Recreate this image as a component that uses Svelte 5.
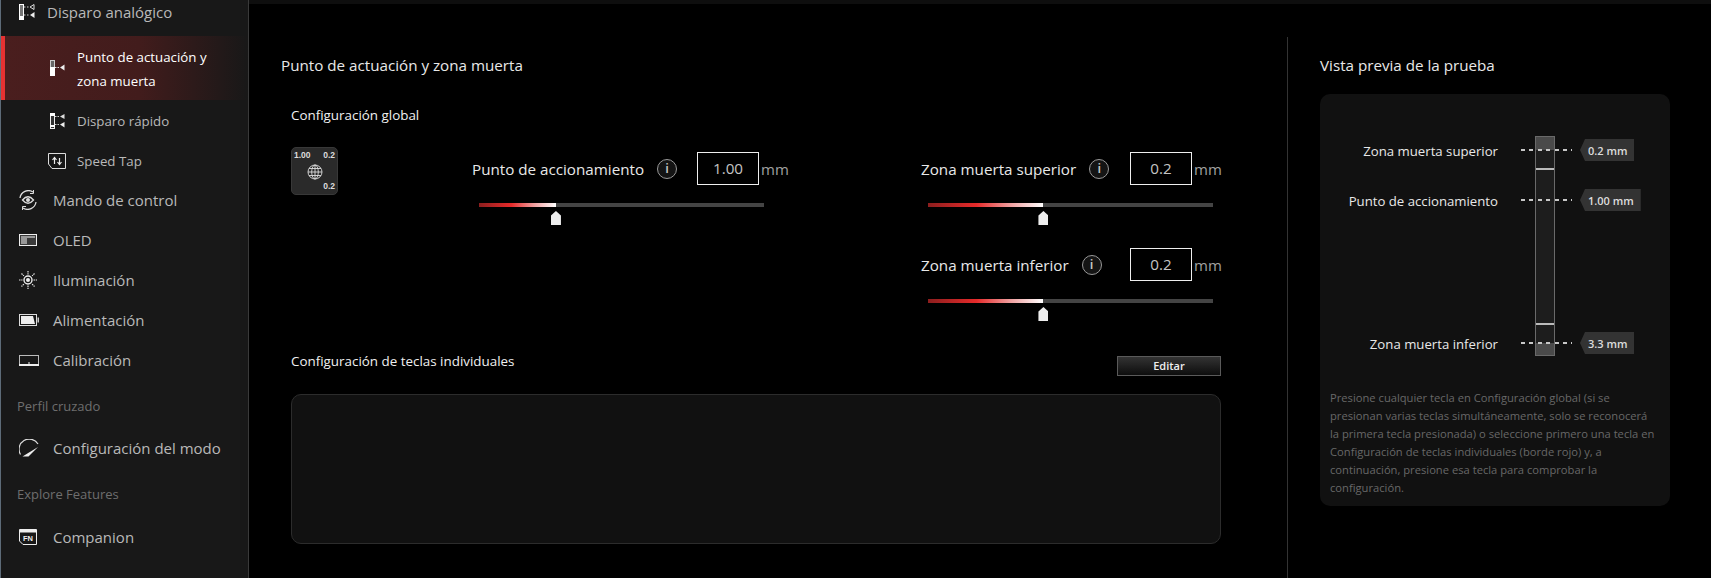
<script>
    const fields = [
        { label: "Punto de accionamiento", value: "1.00", cls: "a" },
        { label: "Zona muerta superior", value: "0.2", cls: "b" },
        { label: "Zona muerta inferior", value: "0.2", cls: "c" },
    ];
    const markers = [
        { label: "Zona muerta superior", tag: "0.2 mm", y: 56 },
        { label: "Punto de accionamiento", tag: "1.00 mm", y: 106 },
        { label: "Zona muerta inferior", tag: "3.3 mm", y: 249 },
    ];
</script>

<div class="app">
    <nav class="sidebar">
        <div class="row first">
            <svg class="icon" width="16" height="16" viewBox="0 0 16 16"><rect x="0.5" y="0.5" width="4" height="15" fill="#777" stroke="#fff" /><rect y="12" width="5" height="4" fill="#fff" /><path d="M5 3h6M5 11h6" stroke="#ccc" stroke-dasharray="1.5 1.5" /><path d="M15 .5v5L11 3z" fill="none" stroke="#ddd" /><path d="M15.5 8v6L11 11z" fill="#eee" /></svg>
            <span>Disparo analógico</span>
        </div>
        <div class="sub active">
            <svg width="15" height="16" viewBox="0 0 15 16"><rect x="0.5" y="0.5" width="4" height="15" fill="#666" stroke="#ccc" /><rect y="7" width="5" height="9" fill="#fff" /><path d="M5 7.5h5" stroke="#ddd" stroke-dasharray="1.5 1" /><path d="M14.5 4.5v6L10 7.5z" fill="#eee" /></svg>
            <span>Punto de actuación y<br />zona muerta</span>
        </div>
        <div class="sub">
            <svg width="15" height="16" viewBox="0 0 15 16"><rect x="0.5" y="0.5" width="4" height="15" fill="#333" stroke="#eee" /><path d="M0 0h5v3H0zM0 12h5v2H0z" fill="#fff" /><path d="M5 3.5h5M5 11.5h5" stroke="#ccc" stroke-dasharray="1.5 1" /><path d="M14.5 1v5L10 3.5z" fill="#ddd" /><path d="M14.5 9v5.5L10 11.5z" fill="#eee" /></svg>
            <span>Disparo rápido</span>
        </div>
        <div class="sub speed">
            <svg class="wide" width="18" height="16" viewBox="0 0 18 16"><path d="M.5 11V.5h17v15H4L.5 11" fill="none" stroke="#ddd" /><path d="M6.500 11V5M4.500 7l2-2.500 2 2.500M11.500 5v6M9.500 9l2 2.500 2-2.500" fill="none" stroke="#eee" stroke-width="1.200" /></svg>
            <span>Speed Tap</span>
        </div>
        <div class="row">
            <svg class="icon" width="18" height="20" viewBox="0 0 18 20"><circle cx="9" cy="10" r="2" fill="#ddd" /><path d="M3.500 10Q9 3.500 14.500 10 9 16.500 3.500 10z" fill="none" stroke="#ddd" stroke-width="1.300" /><path d="M1 8a8.500 8.500 0 0 1 13-6M17 12a8.500 8.500 0 0 1-13 6" fill="none" stroke="#ddd" stroke-width="1.300" /><path d="M14.500 0v3.500H11M3.500 20v-3.500H7" fill="none" stroke="#ddd" /></svg>
            <span>Mando de control</span>
        </div>
        <div class="row">
            <svg class="icon" width="18" height="12" viewBox="0 0 18 12"><rect x="0.500" y="0.500" width="17" height="11" fill="#3a3a3a" stroke="#eee" /><path d="M2 2h14v2H8v6H2z" fill="#999" /></svg>
            <span>OLED</span>
        </div>
        <div class="row">
            <svg class="icon" width="18" height="18" viewBox="0 0 18 18"><circle cx="9" cy="9" r="4" fill="none" stroke="#eee" stroke-width="1.400" /><circle cx="9" cy="9" r="2" fill="#eee" /><path d="M9 0v3.500M9 14.500V18M0 9h3.500M14.500 9H18M2.500 2.500l2.400 2.400M13.100 13.100l2.400 2.400M15.500 2.500l-2.400 2.400M4.900 13.100l-2.400 2.400" stroke="#e4e4e4" stroke-width="1.200" stroke-dasharray="1.500 .7" /></svg>
            <span>Iluminación</span>
        </div>
        <div class="row">
            <svg class="icon" width="20" height="12" viewBox="0 0 20 12"><rect x="0.500" y="0.500" width="17" height="11" fill="none" stroke="#ddd" /><path d="M2 2h12l2 8H2z" fill="#eee" /><rect x="18.500" y="3.500" width="1.500" height="5" fill="#ccc" /></svg>
            <span>Alimentación</span>
        </div>
        <div class="row">
            <svg class="icon" width="20" height="11" viewBox="0 0 20 11"><rect x="0.500" y="0.500" width="19" height="10" fill="none" stroke="#bbb" /><path d="M0 9h20v2H0zM9.500 7h1v2h-1z" fill="#eee" /></svg>
            <span>Calibración</span>
        </div>
        <div class="heading one">Perfil cruzado</div>
        <div class="row">
            <svg class="icon" width="20" height="18" viewBox="0 0 20 18"><path d="M1.500 15.500A10 10 0 0 1 19 5" fill="none" stroke="#ddd" stroke-width="1.200" /><path d="M3.500 17.500 19 8 9.500 17.500z" fill="#eee" /></svg>
            <span>Configuración del modo</span>
        </div>
        <div class="heading two">Explore Features</div>
        <div class="row">
            <svg class="icon" width="18" height="16" viewBox="0 0 18 16"><path d="M.5 12V.5h17v15H4L.5 12" fill="none" stroke="#eee" /><rect x="1" y="1" width="16" height="2.500" fill="#eee" /><text class="fn" x="9" y="12" text-anchor="middle">FN</text></svg>
            <span>Companion</span>
        </div>
    </nav>

    <main class="main">
        <section class="config">
            <h1>Punto de actuación y zona muerta</h1>
            <div class="group">
                <h2>Configuración global</h2>
                <div class="fields">
                    <div class="tile">
                        <span>1.00</span>
                        <span class="right">0.2</span>
                        <svg class="globe" width="16" height="16" viewBox="0 0 16 16" fill="none" stroke="#ddd" stroke-width="0.900"><circle cx="8" cy="8" r="7" /><ellipse cx="8" cy="8" rx="3.300" ry="7" /><path d="M8 1v14M1 8h14M2 4.500h12M2 11.500h12" /></svg>
                        <span class="right last">0.2</span>
                    </div>
                    {#each fields as f}
                        <div class="field {f.cls}">
                            <div class="head">
                                <div class="name">
                                    <span>{f.label}</span>
                                    <span class="info">i</span>
                                </div>
                                <div class="input">{f.value}</div>
                                <span class="unit">mm</span>
                            </div>
                            <div class="slider">
                                <div class="fill"></div>
                                <div class="thumb"></div>
                            </div>
                        </div>
                    {/each}
                </div>
                <div class="keys-head">
                    <h2>Configuración de teclas individuales</h2>
                    <button>Editar</button>
                </div>
                <div class="keys"></div>
            </div>
        </section>

        <aside class="preview">
            <h1>Vista previa de la prueba</h1>
            <div class="card">
                <div class="diagram">
                    <div class="track">
                        <div class="shade top"></div>
                        <div class="mark up"></div>
                        <div class="mark down"></div>
                        <div class="shade bottom"></div>
                    </div>
                    {#each markers as m}
                        <div class="marker" style="top: {m.y - 11}px">
                            <span class="mlabel">{m.label}</span>
                            <span class="dash"></span>
                            <span class="tag">{m.tag}</span>
                        </div>
                    {/each}
                </div>
                <p>Presione cualquier tecla en Configuración global (si se presionan varias teclas simultáneamente, solo se reconocerá la primera tecla presionada) o seleccione primero una tecla en Configuración de teclas individuales (borde rojo) y, a continuación, presione esa tecla para comprobar la configuración.</p>
            </div>
        </aside>
    </main>
</div>

<style>
    :global(body) {
        background: #000;
    }
    .app {
        display: flex;
        width: 1711px;
        height: 578px;
        overflow: hidden;
        font-family: "Open Sans", "Noto Sans", sans-serif;
        color: #fff;
    }
    .sidebar {
        flex: none;
        box-sizing: border-box;
        width: 249px;
        background: #181818;
        border-left: 1px solid #5d6b78;
        border-right: 1px solid #3a3a3a;
        color: #b9b9b9;
        font-size: 15px;
    }
    .row {
        display: flex;
        align-items: center;
        height: 40px;
        padding-left: 52px;
        position: relative;
    }
    .row .icon {
        position: absolute;
        left: 0;
        margin-left: 18px;
    }
    .row.first {
        height: 24px;
        padding-left: 46px;
        margin-bottom: 12px;
    }
    .sub {
        display: flex;
        align-items: center;
        gap: 12px;
        height: 40px;
        padding-left: 49px;
        font-size: 13.300px;
    }
    .sub.speed {
        height: 39px;
    }
    .sub .wide {
        margin: 0 -1px 0 -2px;
    }
    .active {
        height: 64px;
        padding-left: 45px;
        border-left: 4px solid #e53232;
        background: linear-gradient(90deg, #4a1e1e 0%, #421c1c 55%, #181818 100%);
        color: #fff;
        line-height: 24px;
        margin-bottom: 1px;
    }
    .active span {
        margin-top: 2px;
    }
    .heading {
        padding-left: 16px;
        font-size: 13px;
        color: #6e6e6e;
        line-height: 20px;
    }
    .heading.one {
        margin-top: 16px;
        margin-bottom: 12px;
    }
    .heading.two {
        margin-top: 16px;
        margin-bottom: 13px;
    }
    .fn {
        font-family: "Liberation Sans", sans-serif;
        font-size: 7.500px;
        font-weight: 700;
        fill: #eee;
    }

    .main {
        flex: 1;
        display: flex;
        border-top: 4px solid #0e0e0e;
    }
    .config {
        flex: none;
        box-sizing: border-box;
        width: 1038px;
        padding: 50px 0 0 32px;
    }
    h1 {
        margin: 0;
        font-size: 15.200px;
        font-weight: 400;
        line-height: 23px;
        color: #e8e8e8;
    }
    h2 {
        margin: 0;
        font-size: 13.400px;
        font-weight: 400;
        line-height: 20px;
        color: #f0f0f0;
    }
    .group {
        width: 930px;
        margin: 28px 0 0 10px;
    }
    .fields {
        display: grid;
        grid-template-columns: 181px 449px auto;
        row-gap: 23px;
        margin-top: 22px;
    }
    .tile {
        box-sizing: border-box;
        display: grid;
        grid-template-columns: 1fr 1fr;
        align-content: space-between;
        width: 47px;
        height: 48px;
        padding: 2px 2px;
        background: #2a2a2a;
        border: 1px solid #383838;
        border-radius: 5px;
        font-family: "Liberation Sans", sans-serif;
        font-size: 8.500px;
        font-weight: 700;
        line-height: 11px;
        color: #ddd;
        position: relative;
    }
    .tile .right {
        text-align: right;
    }
    .tile .last {
        grid-column: 2;
        grid-row: 3;
    }
    .globe {
        position: absolute;
        left: 15px;
        top: 16px;
    }
    .field {
        margin-top: 5px;
    }
    .field.c {
        grid-column: 3;
        margin-top: 0;
    }
    .head {
        display: flex;
        align-items: center;
        height: 33px;
    }
    .name {
        display: flex;
        align-items: center;
        gap: 13px;
        min-width: 189px;
        font-size: 15.200px;
        white-space: nowrap;
        color: #e8e8e8;
    }
    .info {
        box-sizing: border-box;
        width: 20px;
        height: 20px;
        border: 1px solid #999;
        border-radius: 50%;
        background: #141414;
        text-align: center;
        font-size: 13px;
        font-weight: 600;
        line-height: 17px;
        color: #c8c8c8;
    }
    .input {
        box-sizing: border-box;
        width: 62px;
        height: 33px;
        margin-left: 20px;
        border: 1px solid #eee;
        text-align: center;
        font-size: 15.200px;
        line-height: 31px;
        color: #c4c4c4;
    }
    .unit {
        margin: 1px 0 0 2px;
        font-size: 15px;
        color: #a0a0a0;
    }
    .slider {
        position: relative;
        width: 285px;
        height: 4px;
        margin: 18px 0 18px 7px;
        background: #444;
    }
    .fill {
        width: 40.500%;
        height: 100%;
        background: linear-gradient(90deg, #8c1e1e 0%, #e62a2a 42%, #f0a0a0 72%, #fff 100%);
    }
    .a .fill {
        width: 27%;
    }
    .thumb {
        position: absolute;
        top: 8px;
        left: calc(40.500% - 5px);
        width: 10px;
        height: 14px;
        background: #eee;
        clip-path: polygon(50% 0, 100% 32%, 100% 100%, 0 100%, 0 32%);
    }
    .a .thumb {
        left: calc(27% - 5px);
    }
    .keys-head {
        display: flex;
        justify-content: space-between;
        align-items: flex-start;
        margin-top: 30px;
    }
    button {
        width: 104px;
        height: 20px;
        margin-top: 5px;
        padding: 0;
        border: 1px solid #5a5a5a;
        background: linear-gradient(180deg, #333, #0d0d0d);
        color: #eee;
        font-family: inherit;
        font-size: 11px;
        font-weight: 600;
        line-height: 18px;
    }
    .keys {
        box-sizing: border-box;
        height: 150px;
        margin-top: 18px;
        background: #111;
        border: 1px solid #2c2c2c;
        border-radius: 10px;
    }

    .preview {
        flex: none;
        box-sizing: border-box;
        width: 384px;
        margin-top: 33px;
        padding: 17px 0 0 32px;
        border-left: 1px solid #333;
    }
    .card {
        width: 350px;
        margin-top: 17px;
        padding-bottom: 9px;
        background: #111;
        border-radius: 10px;
    }
    .diagram {
        position: relative;
        height: 295px;
    }
    .track {
        position: absolute;
        left: 215px;
        top: 42px;
        box-sizing: border-box;
        width: 20px;
        height: 220px;
        background: #1d1d1d;
        border: 1px solid #6a6a6a;
    }
    .shade {
        position: absolute;
        left: 0;
        right: 0;
        background: #4a4a4a;
    }
    .shade.top {
        top: 0;
        height: 13px;
    }
    .shade.bottom {
        bottom: 0;
        height: 12px;
    }
    .mark {
        position: absolute;
        left: 0;
        right: 0;
        height: 2px;
        background: #bbb;
    }
    .mark.up {
        top: 31px;
    }
    .mark.down {
        bottom: 30px;
    }
    .marker {
        position: absolute;
        left: 0;
        display: flex;
        align-items: center;
        height: 22px;
    }
    .mlabel {
        width: 178px;
        margin-top: 2px;
        text-align: right;
        font-size: 13.200px;
        color: #e8e8e8;
    }
    .dash {
        width: 51px;
        height: 2px;
        margin-left: 23px;
        background: repeating-linear-gradient(90deg, #c8c8c8 0 4px, transparent 4px 8.400px);
    }
    .tag {
        margin-left: 8px;
        padding: 0 7px 0 8px;
        height: 22px;
        background: #333;
        clip-path: polygon(5px 0, 100% 0, 100% 100%, 5px 100%, 0 50%);
        font-size: 11px;
        font-weight: 600;
        line-height: 23px;
        color: #ddd;
    }
    p {
        margin: 0 12px 0 10px;
        font-size: 11.200px;
        line-height: 18px;
        color: #686868;
    }
</style>
